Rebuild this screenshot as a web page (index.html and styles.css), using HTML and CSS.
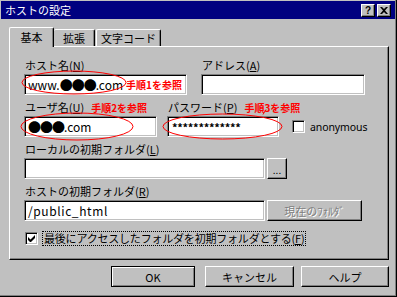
FILE: index.html
```html
<!DOCTYPE html>
<html lang="ja">
<head>
<meta charset="utf-8">
<title>ホストの設定</title>
<link rel="stylesheet" href="styles.css">
</head>
<body>
<div class="window">
  <div class="titlebar">
    <span class="title">ホストの設定</span>
    <div class="caption-btns">
      <span class="cbtn q">?</span>
      <span class="cbtn">
        <svg width="8" height="7" viewBox="0 0 8 7"><path d="M0 0h2l2 2 2-2h2L5 3.5 8 7H6L4 5 2 7H0l3-3.5z" fill="#000"/></svg>
      </span>
    </div>
  </div>
  <div class="content">
    <div class="tabs">
      <div class="tab active">基本</div>
      <div class="tab t2">拡張</div>
      <div class="tab t3">文字コード</div>
    </div>
    <div class="panel">
      <div class="row row1">
        <div class="field">
          <div class="label">ホスト名(<u>N</u>)</div>
          <div class="input"><span>www.</span><span class="dots">●●●</span><span>.com</span><span class="note in-note">手順1を参照</span></div>
        </div>
        <div class="field">
          <div class="label">アドレス(<u>A</u>)</div>
          <div class="input"></div>
        </div>
      </div>
      <div class="row row2">
        <div class="field">
          <div class="label">ユーザ名(<u>U</u>)<span class="note">手順2を参照</span></div>
          <div class="input"><span class="dots">●●●</span><span>.com</span></div>
        </div>
        <div class="field">
          <div class="label">パスワード(<u>P</u>)<span class="note">手順3を参照</span></div>
          <div class="input pw">*************</div>
        </div>
        <div class="check-wrap">
          <span class="checkbox"></span>
          <span class="check-label">anonymous</span>
        </div>
      </div>
      <div class="row row3">
        <div class="field">
          <div class="label">ローカルの初期フォルダ(<u>L</u>)</div>
          <div class="input"></div>
        </div>
        <div class="btn small-btn">...</div>
      </div>
      <div class="row row3b">
        <div class="field">
          <div class="label">ホストの初期フォルダ(<u>R</u>)</div>
          <div class="input mono">/public_html</div>
        </div>
        <div class="btn disabled">現在のﾌｫﾙﾀﾞ</div>
      </div>
      <div class="row row4">
        <span class="checkbox checked">
          <svg width="7" height="7" viewBox="0 0 7 7"><path d="M0 2v3l2 2h1l4-4V0L2.5 4.5z" fill="#000"/></svg>
        </span>
        <span class="focus">最後にアクセスしたフォルダを初期フォルダとする(<u>F</u>)</span>
      </div>
    </div>
    <div class="buttons">
      <div class="btn default">OK</div>
      <div class="btn">キャンセル</div>
      <div class="btn">ヘルプ</div>
    </div>
  </div>
  <svg class="marks" width="397" height="297" viewBox="0 0 397 297">
    <g fill="none" stroke="#f00" stroke-width="1">
      <ellipse cx="74" cy="82.5" rx="52" ry="11.5"/>
      <ellipse cx="77" cy="126.5" rx="56" ry="13.5"/>
      <path d="M106 113.5c1-2 3-3 3-5"/>
      <ellipse cx="222.5" cy="126.5" rx="59.5" ry="12.5"/>
      <path d="M263 114.5c1-2 2-3 3-5"/>
    </g>
  </svg>
</div>
</body>
</html>
```
FILE: styles.css
```css
* { box-sizing: border-box; }
html, body { margin: 0; padding: 0; }
body {
  width: 397px;
  height: 297px;
  overflow: hidden;
  background: #c0c0c0;
  font-family: "Noto Sans CJK JP", "Noto Sans", sans-serif;
  font-size: 11px;
  color: #000;
}
u { text-decoration: underline; text-underline-offset: 1px; }

.window {
  position: relative;
  width: 397px;
  height: 297px;
  background: #c0c0c0;
  border-right: 1px solid #000;
  border-bottom: 1px solid #000;
  box-shadow: inset -1px -1px #808080;
  padding: 1px 1px 0 1px;
}

.titlebar {
  height: 18px;
  background: #000080;
  color: #fff;
  display: flex;
  align-items: center;
  justify-content: space-between;
  padding: 0 4px 0 4px;
}
.title { font-size: 11px; line-height: 18px; }
.caption-btns { display: flex; gap: 2px; margin-top: 1px; }
.cbtn {
  width: 14px;
  height: 13px;
  background: #c0c0c0;
  border: 1px solid;
  border-color: #fff #000 #000 #fff;
  box-shadow: inset -1px -1px #808080;
  display: flex;
  align-items: center;
  justify-content: center;
  color: #000;
  font-family: "Liberation Sans", sans-serif;
  font-weight: bold;
  font-size: 10px;
  line-height: 1;
}

.content { padding: 8px 0 0 8px; }

.tabs {
  display: flex;
  align-items: flex-end;
  height: 19px;
  position: relative;
  z-index: 2;
}
.tab {
  height: 17px;
  background: #c0c0c0;
  border-top: 1px solid #fff;
  border-left: 1px solid #fff;
  border-right: 1px solid #000;
  box-shadow: inset -1px 0 #808080;
  border-radius: 2px 2px 0 0;
  display: flex;
  align-items: center;
  justify-content: center;
  font-size: 11px;
  line-height: 14px;
}
.tab.active {
  width: 45px;
  height: 20px;
  margin-bottom: -1px;
  padding-bottom: 2px;
}
.tab.t2 { width: 41px; border-left: none; }
.tab.t3 { width: 65px; margin-left: 1px; }

.panel {
  position: relative;
  width: 380px;
  height: 214px;
  border-top: 1px solid #fff;
  border-left: 1px solid #fff;
  border-right: 1px solid #000;
  border-bottom: 1px solid #000;
  box-shadow: inset -1px -1px #808080;
  padding: 10px 0 0 14px;
  display: flex;
  flex-direction: column;
}

.row { display: grid; align-items: end; }
.row1 { grid-template-columns: 163px 164px; column-gap: 14px; }
.row2 { grid-template-columns: 133px 112px auto; column-gap: 10px; margin-top: 4px; }
.row3 { grid-template-columns: 241px 20px; column-gap: 2px; margin-top: 4px; }
.row3b { grid-template-columns: 241px 95px; column-gap: 2px; margin-top: 4px; }
.row4 {
  display: flex;
  align-items: center;
  margin-top: 10px;
  height: 15px;
  padding-left: 1px;
}

.label {
  height: 16px;
  line-height: 16px;
  margin-bottom: 1px;
  padding-left: 1px;
  white-space: nowrap;
}
.note {
  color: #f00;
  font-size: 10px;
  font-weight: bold;
  margin-left: 7px;
}
.in-note { margin-left: 3px; line-height: 1; }

.input {
  height: 21px;
  background: #fff;
  border: 1px solid;
  border-color: #808080 #fff #fff #808080;
  box-shadow: inset 1px 1px #000, inset -1px -1px #c0c0c0;
  display: flex;
  align-items: center;
  padding: 0 0 0 3px;
  font-size: 12px;
  white-space: nowrap;
  overflow: hidden;
}
.dots { font-size: 13px; letter-spacing: -1px; }
.pw { font-size: 11px; font-weight: bold; letter-spacing: -0.3px; padding-left: 4px; }
.mono { font-size: 12px; letter-spacing: 0.6px; }

.check-wrap {
  display: flex;
  align-items: center;
  height: 21px;
  margin-left: 3px;
}
.checkbox {
  width: 13px;
  height: 13px;
  flex: none;
  background: #fff;
  border: 1px solid;
  border-color: #808080 #fff #fff #808080;
  box-shadow: inset 1px 1px #000, inset -1px -1px #c0c0c0;
  display: flex;
  align-items: center;
  justify-content: center;
}
.check-label { margin-left: 5px; font-family: "Noto Sans", sans-serif; font-size: 10.5px; letter-spacing: -0.1px; }
.focus {
  margin-left: 4px;
  padding: 0 1px;
  height: 15px;
  line-height: 13px;
  border: 1px dotted #000;
  white-space: nowrap;
  letter-spacing: -0.2px;
}

.btn {
  height: 21px;
  background: #c0c0c0;
  border: 1px solid;
  border-color: #fff #000 #000 #fff;
  box-shadow: inset -1px -1px #808080;
  display: flex;
  align-items: center;
  justify-content: center;
  font-size: 11px;
  white-space: nowrap;
}
.small-btn { align-items: flex-end; padding-bottom: 3px; line-height: 1; font-size: 10px; }
.disabled { color: #808080; text-shadow: 1px 1px #fff; font-size: 11px; }

.buttons {
  display: flex;
  margin-top: 6px;
  padding-left: 102px;
}
.buttons .btn { height: 21px; }
.buttons .btn:nth-child(1) { width: 84px; }
.buttons .btn:nth-child(2) { width: 89px; margin-left: 10px; }
.buttons .btn:nth-child(3) { width: 88px; margin-left: 7px; }
.btn.default {
  border: 1px solid #000;
  box-shadow: inset 1px 1px #fff, inset -1px -1px #808080;
}

.marks { position: absolute; left: 0; top: 0; pointer-events: none; }
```
